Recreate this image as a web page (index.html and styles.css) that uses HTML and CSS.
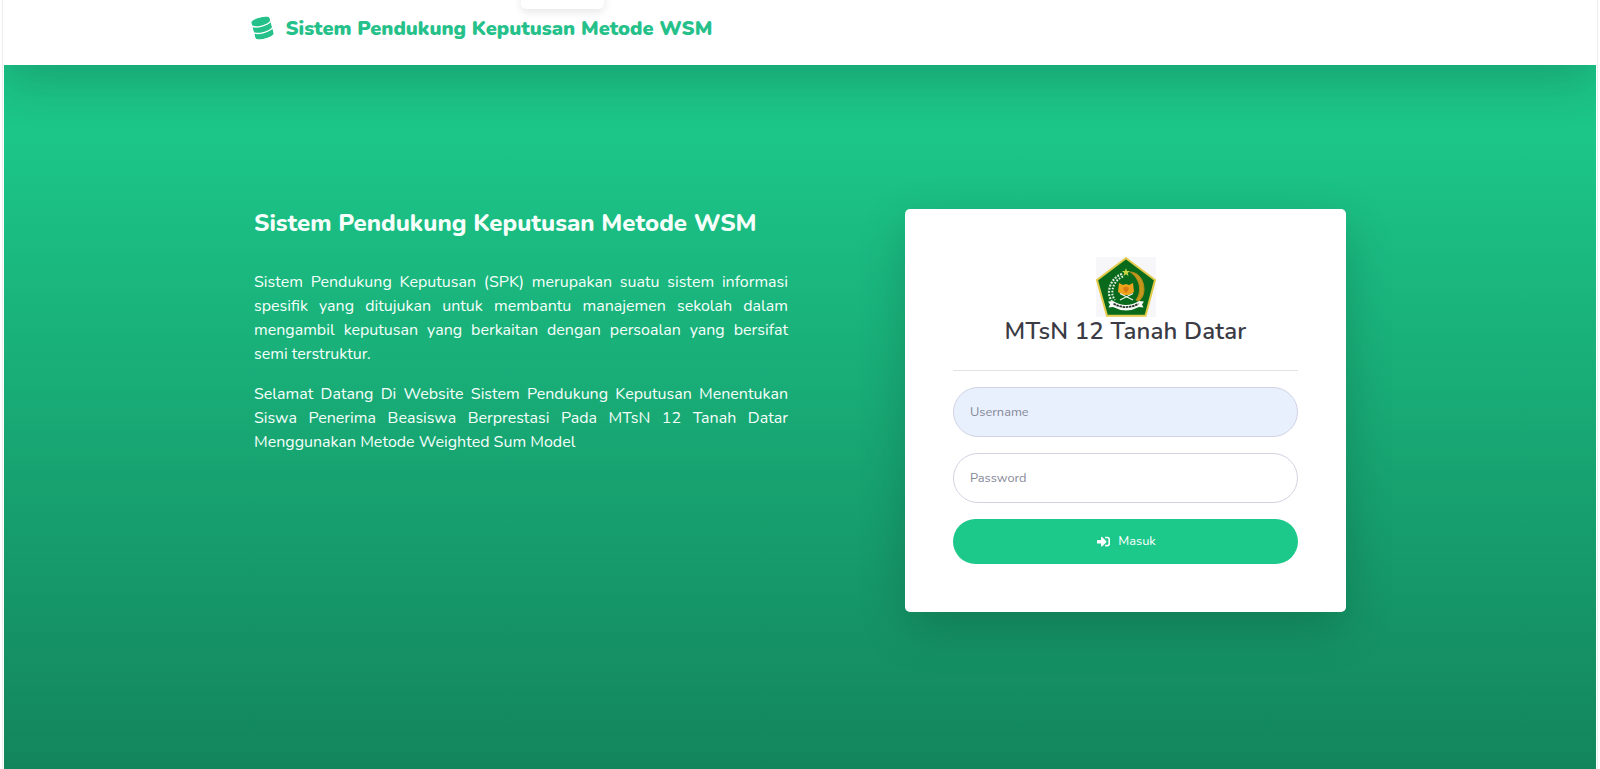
FILE: index.html
```html
<!DOCTYPE html>
<html lang="id">
<head>
<meta charset="utf-8">
<title>Sistem Pendukung Keputusan Metode WSM</title>
<link rel="stylesheet" href="styles.css">
</head>
<body>
<div class="page">
  <nav class="navbar">
    <a class="brand">
      <svg class="brand-icon" viewBox="0 0 448 512"><path fill="currentColor" d="M448 73.143v45.714C448 159.143 347.667 192 224 192S0 159.143 0 118.857V73.143C0 32.857 100.333 0 224 0s224 32.857 224 73.143zM448 176v102.857C448 319.143 347.667 352 224 352S0 319.143 0 278.857V176c48.125 33.143 136.208 48.572 224 48.572S399.874 209.143 448 176zm0 160v102.857C448 479.143 347.667 512 224 512S0 479.143 0 438.857V336c48.125 33.143 136.208 48.572 224 48.572S399.874 369.143 448 336z"/></svg>
      <span class="brand-text">Sistem Pendukung Keputusan Metode WSM</span>
    </a>
    <div class="top-tab"></div>
  </nav>
  <main class="content">
    <section class="intro">
      <h1 class="intro-title">Sistem Pendukung Keputusan Metode WSM</h1>
      <p>Sistem Pendukung Keputusan (SPK) merupakan suatu sistem informasi spesifik yang ditujukan untuk membantu manajemen sekolah dalam mengambil keputusan yang berkaitan dengan persoalan yang bersifat semi terstruktur.</p>
      <p>Selamat Datang Di Website Sistem Pendukung Keputusan Menentukan Siswa Penerima Beasiswa Berprestasi Pada MTsN 12 Tanah Datar Menggunakan Metode Weighted Sum Model</p>
    </section>
    <section class="card">
      <svg class="logo" viewBox="0 0 60 60">
        <rect width="60" height="60" fill="#f7f7fa"/>
        <path d="M30 1.200 59 23 49.500 58.800h-38.500L1 23z" fill="#0a6a1c" stroke="#e3ca4b" stroke-width="2"/>
        <path d="M26 17C17 20 12.500 29 13 37q.5 4 3 7" fill="none" stroke="#dcebdc" stroke-width="2.200" stroke-dasharray="1.900 1.300"/>
        <path d="M27 19.500C19 23 16 30 16.300 37q.5 3 2.700 6" fill="none" stroke="#e8f2e6" stroke-width="2" stroke-dasharray="1.600 1.500"/>
        <path d="M34 15c9 0 14 9 14 17 0 6-2 9-5 12l-3-1c3-4 4-8 3.500-13C43 24 39 18 34 15z" fill="#c2971b" stroke="#b08a18"/>
        <path d="m30 11 1 3h3l-2.300 2 .8 3-2.500-1.800-2.500 1.800.8-3-2.300-2h3z" fill="#c9d444"/>
        <path d="m23 26 4 2 3-1 3 1 4-2 1 9-5 3h-6l-5-3z" fill="#eea31c"/>
        <path d="M27 31q3-3 6 0-1 4-3 5-2-1-3-5" fill="#d97a13"/>
        <path d="m24 43 13-6.500m0 6.500-13-6.500" stroke="#f1f4e9" stroke-width="1.100"/>
        <path d="m12 44.500 5-.5q13 8 26 0l5 .5-2 3 1.500 3-4.500-.5q-13 7-26 0l-4.500.5 1.500-3z" fill="#f8faf5"/>
        <path d="M17.500 46.800q12.500 6.500 25 0" fill="none" stroke="#29372d" stroke-width="1.800" stroke-dasharray="2.500 .7"/>
      </svg>
      <h2 class="card-title">MTsN 12 Tanah Datar</h2>
      <hr class="rule">
      <form class="form">
        <div class="field field-filled">Username</div>
        <div class="field">Password</div>
        <div class="submit">
          <svg class="submit-icon" viewBox="0 0 512 512"><path fill="currentColor" d="M416 448h-84c-6.600 0-12-5.400-12-12v-40c0-6.600 5.400-12 12-12h84c17.700 0 32-14.300 32-32V160c0-17.700-14.300-32-32-32h-84c-6.600 0-12-5.400-12-12V76c0-6.600 5.400-12 12-12h84c53 0 96 43 96 96v192c0 53-43 96-96 96zm-47-201L201 79c-15-15-41-4.500-41 17v96H24c-13.300 0-24 10.700-24 24v96c0 13.300 10.700 24 24 24h136v96c0 21.500 26 32 41 17l168-168c9.300-9.400 9.300-24.600 0-34z"/></svg>
          <span>Masuk</span>
        </div>
      </form>
    </section>
  </main>
</div>
</body>
</html>
```
FILE: styles.css
```css
* { box-sizing: border-box; }
body {
  margin: 0;
  padding: 0 4px;
  background: linear-gradient(90deg, #fff 2px, #ececec 2px, #ececec 3px, #fff 3px, #fff 1597px, #ececec 1597px, #ececec 1598px, #fff 1598px);
  font-family: Nunito, Lato, "Open Sans", sans-serif;
  overflow: hidden;
}
.page {
  height: 769px;
  display: flex;
  flex-direction: column;
  overflow: hidden;
  background: linear-gradient(180deg, #1cc588 0, #1cc588 142px, #13855c 769px);
}
.navbar {
  position: relative;
  height: 65px;
  flex: none;
  padding: 0 249px;
  background: #fff;
  box-shadow: 0 16px 48px rgba(0, 0, 0, .175);
}
.brand {
  display: flex;
  align-items: center;
  height: 56px;
  color: #26c18a;
}
.brand-icon { width: 19px; height: 22px; transform: rotate(-15deg); }
.brand-text { margin-left: 13.5px; font-size: 20px; font-weight: 900; white-space: nowrap; }
.top-tab {
  position: absolute;
  left: 517px;
  top: -8px;
  width: 83px;
  height: 17px;
  border-radius: 5px;
  background: #fff;
  box-shadow: 0 3px 8px rgba(0, 0, 0, .1);
}
.content {
  display: flex;
  align-items: flex-start;
  justify-content: space-between;
  padding: 144px 250px 0;
}
.intro { width: 534px; color: #f6fffb; }
.intro-title {
  margin: 0 0 32px;
  font-size: 24px;
  line-height: 29px;
  font-weight: 800;
  white-space: nowrap;
}
.intro p {
  margin: 0 0 16px;
  font-size: 16px;
  line-height: 24px;
  text-align: justify;
}
.card {
  width: 441px;
  height: 403px;
  padding: 48px;
  border-radius: 5px;
  background: #fff;
  box-shadow: 0 16px 48px rgba(0, 0, 0, .175);
}
.logo { display: block; width: 60px; height: 60px; margin: 0 auto; }
.card-title {
  margin: 0;
  text-align: center;
  font-size: 24px;
  line-height: 29px;
  font-weight: 600;
  letter-spacing: .18px;
  color: #3a3b45;
}
.rule { margin: 24px 0 16px; border: 0; border-top: 1px solid #e2e2e4; }
.form { display: flex; flex-direction: column; gap: 16px; }
.field {
  display: flex;
  align-items: center;
  height: 50px;
  padding: 0 16px;
  border: 1px solid #d1d3e2;
  border-radius: 25px;
  font-size: 12.8px;
  color: #858796;
}
.field-filled { background: #e8f0fe; }
.submit {
  display: flex;
  align-items: center;
  justify-content: center;
  gap: 8px;
  height: 45px;
  padding: 0 0 1px 2px;
  border-radius: 23px;
  background: #1cc88a;
  color: #fff;
  font-size: 12.8px;
}
.submit-icon { width: 13px; height: 13px; }
```
